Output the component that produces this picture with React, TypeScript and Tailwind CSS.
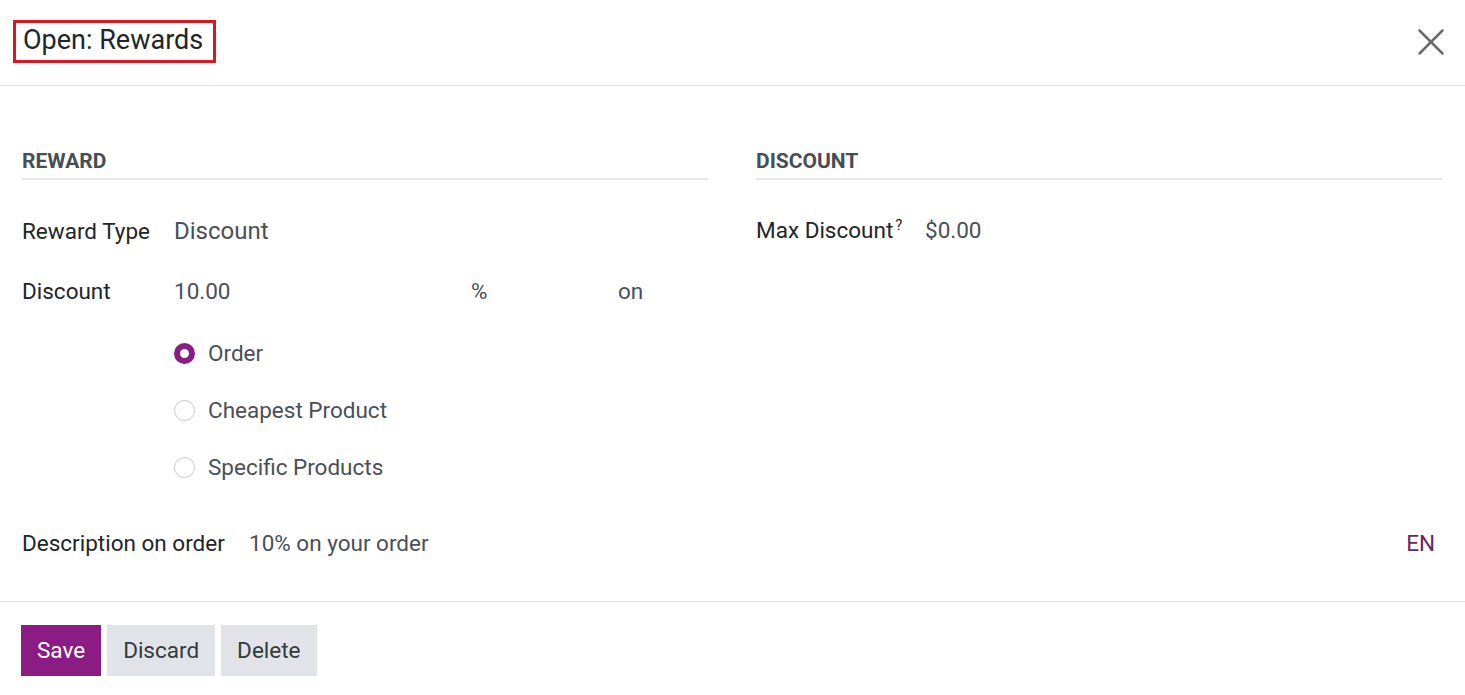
import { X } from 'lucide-react';

const options = [
  { label: 'Order', checked: true },
  { label: 'Cheapest Product', checked: false },
  { label: 'Specific Products', checked: false },
];

function Radio({ checked }: { checked: boolean }) {
  if (checked) {
    return <span className="w-[21px] h-[21px] rounded-full border-[6px] border-[#8a1c83] bg-white shrink-0" />;
  }
  return <span className="w-[21px] h-[21px] rounded-full border border-[#c8c8c8] bg-white shrink-0" />;
}

export default function App() {
  return (
    <div className="w-[1465px] h-[695px] bg-white text-[#212529] font-['Roboto',sans-serif] flex flex-col">
      {/* Header */}
      <div className="h-[86px] border-b border-[#dee2e6] flex items-center justify-between pl-[13px] pr-[11px] shrink-0">
        <div className="border-[3px] border-[#e0141c] h-[43px] pl-[7px] pr-[10px] pb-[2px] flex items-center -mt-[2px]">
          <h1 className="text-[27px] leading-none text-[#212529]">Open: Rewards</h1>
        </div>
        <X className="w-[46px] h-[46px] text-[#6b6b6b] -mt-[2px]" strokeWidth={1.3} />
      </div>

      {/* Body */}
      <div className="flex-1 px-[22px] pt-[62px]">
        <div className="grid grid-cols-[686px_686px] gap-x-[48px]">
          {/* Left: Reward */}
          <div>
            <div className="border-b-2 border-[#e5e7eb] pb-[4px] text-[21px] font-bold text-[#474d56] leading-[26px]">REWARD</div>
            <div className="flex items-center h-[28px] mt-[37px]">
              <span className="w-[152px] text-[22.5px] leading-none">Reward Type</span>
              <span className="text-[24px] leading-none text-[#4a4f57]">Discount</span>
            </div>
            <div className="flex items-center h-[28px] mt-[32px]">
              <span className="w-[152px] text-[22.5px] leading-none">Discount</span>
              <span className="w-[297px] text-[22.5px] leading-none text-[#4a4f57]">10.00</span>
              <span className="w-[147px] text-[22.5px] leading-none text-[#4a4f57]">%</span>
              <span className="text-[22.5px] leading-none text-[#4a4f57]">on</span>
            </div>
            <div className="pl-[152px] flex flex-col gap-[29px] mt-[34px]">
              {options.map((o) => (
                <div key={o.label} className="flex items-center gap-[13px] h-[28px]">
                  <Radio checked={o.checked} />
                  <span className="text-[22.5px] leading-none text-[#4a4f57]">{o.label}</span>
                </div>
              ))}
            </div>
          </div>

          {/* Right: Discount */}
          <div>
            <div className="border-b-2 border-[#e5e7eb] pb-[4px] text-[21px] font-bold text-[#474d56] leading-[26px]">DISCOUNT</div>
            <div className="flex items-center h-[28px] mt-[36px]">
              <span className="w-[169px] text-[22.5px] leading-none">
                Max Discount<sup className="text-[15px] ml-[2px]">?</sup>
              </span>
              <span className="text-[22.5px] leading-none text-[#4a4f57]">$0.00</span>
            </div>
          </div>
        </div>

        {/* Description */}
        <div className="flex items-center h-[28px] mt-[48px]">
          <span className="w-[227px] text-[22.5px] leading-none">Description on order</span>
          <span className="flex-1 text-[22.5px] leading-none text-[#4a4f57]">10% on your order</span>
          <span className="text-[22.5px] leading-none text-[#6f1f66] pr-[8px]">EN</span>
        </div>
      </div>

      {/* Footer */}
      <div className="h-[94px] border-t border-[#dee2e6] pl-[21px] pt-[23px] flex gap-[6px] shrink-0">
        <button className="h-[51px] px-[16px] bg-[#8a1c83] text-white text-[22.5px]">Save</button>
        <button className="h-[51px] px-[16px] bg-[#e0e3e8] text-[#343a40] text-[22.5px]">Discard</button>
        <button className="h-[51px] px-[16px] bg-[#e0e3e8] text-[#343a40] text-[22.5px]">Delete</button>
      </div>
    </div>
  );
}
